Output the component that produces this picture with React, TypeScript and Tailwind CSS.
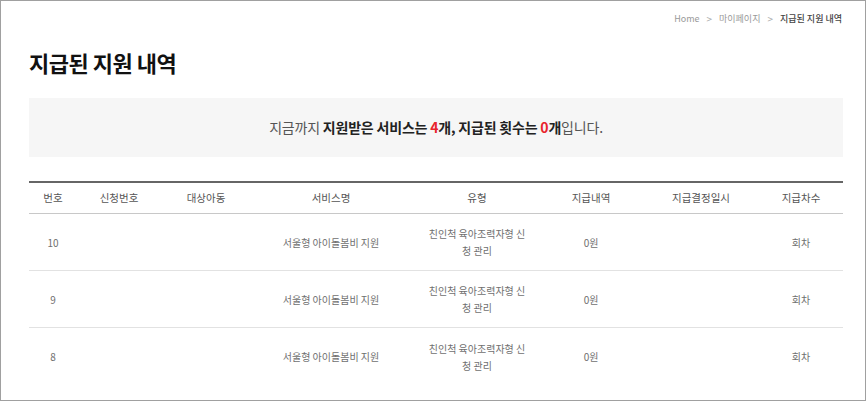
import React from "react";

const rows = [{ no: "10" }, { no: "9" }, { no: "8" }];

const cols = [
  { label: "번호", w: "w-[48px]" },
  { label: "신청번호", w: "w-[84px]" },
  { label: "대상아동", w: "w-[90px]" },
  { label: "서비스명", w: "w-[160px]" },
  { label: "유형", w: "w-[132px]" },
  { label: "지급내역", w: "w-[96px]" },
  { label: "지급결정일시", w: "w-[124px]" },
  { label: "지급차수", w: "w-[76px]" },
];

export default function App() {
  return (
    <div
      className="w-[866px] h-[401px] overflow-hidden bg-white border border-[#a0a0a0] box-border"
      style={{ fontFamily: '"Noto Sans CJK KR", "Noto Sans", sans-serif' }}
    >
      <div className="flex justify-end items-center pr-[23px] pt-[11px] text-[9px] text-[#999] gap-[7px] leading-[13px]">
        <span>Home</span>
        <span className="text-[#aaa] text-[10px]">&gt;</span>
        <span>마이페이지</span>
        <span className="text-[#aaa] text-[10px]">&gt;</span>
        <span className="text-[#444] font-medium">지급된 지원 내역</span>
      </div>
      <div className="pl-[28px] pr-[22px]">
        <h1 className="mt-[22px] text-[22px] font-bold text-[#111] leading-[30px] tracking-[-0.5px]">
          지급된 지원 내역
        </h1>
        <div className="mt-[21px] h-[59px] bg-[#f6f6f6] flex items-center justify-center text-[14px] text-[#555] tracking-[-0.2px]">
          <span>
            지금까지 <b className="text-[#222] font-bold">지원받은 서비스는 </b>
            <b className="text-[#e8242c] font-bold">4</b>
            <b className="text-[#222] font-bold">개, 지급된 횟수는 </b>
            <b className="text-[#e8242c] font-bold">0</b>
            <b className="text-[#222] font-bold">개</b>입니다.
          </span>
        </div>
        <div className="mt-[24px] border-t-2 border-[#666]">
          <div className="flex h-[31px] items-center border-b border-[#c8c8c8] text-[10.5px] text-[#555]">
            {cols.map((c) => (
              <div key={c.label} className={`${c.w} text-center`}>
                {c.label}
              </div>
            ))}
          </div>
          {rows.map((r, i) => (
            <div
              key={r.no}
              className={`flex h-[57px] items-center text-[10px] text-[#6f6f6f] ${
                i < rows.length - 1 ? "border-b border-[#e2e2e2]" : ""
              }`}
            >
              <div className="w-[48px] text-center">{r.no}</div>
              <div className="w-[84px]" />
              <div className="w-[90px]" />
              <div className="w-[160px] text-center">서울형 아이돌봄비 지원</div>
              <div className="w-[132px] text-center px-[16px] leading-[17px]">
                친인척 육아조력자형 신청 관리
              </div>
              <div className="w-[96px] text-center">0원</div>
              <div className="w-[124px]" />
              <div className="w-[76px] text-center">회차</div>
            </div>
          ))}
        </div>
      </div>
    </div>
  );
}
